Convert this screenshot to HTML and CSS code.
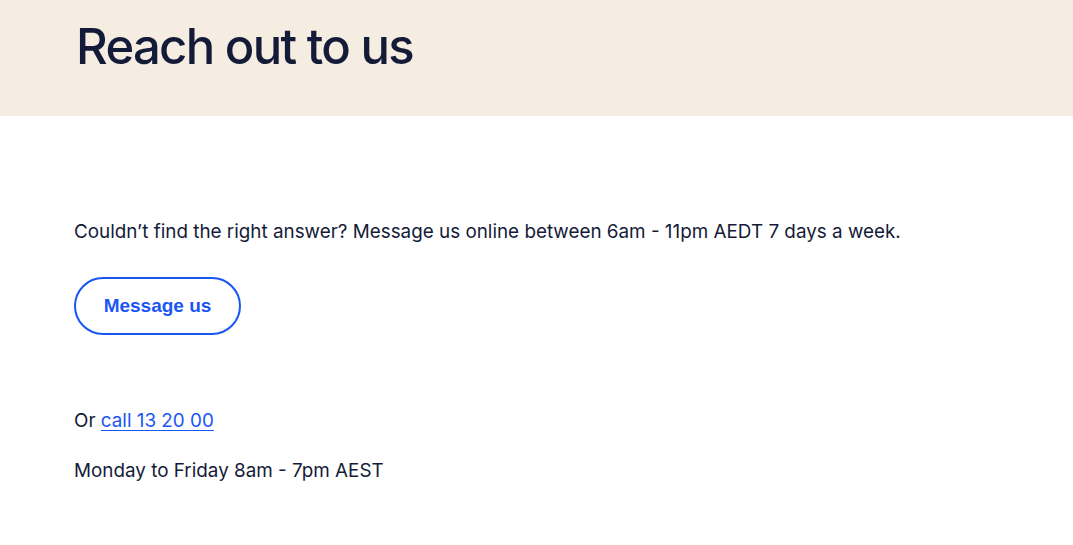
FILE: index.html
```html
<!DOCTYPE html>
<html lang="en">
<head>
<meta charset="utf-8">
<title>Reach out to us</title>
<link rel="stylesheet" href="styles.css">
</head>
<body>
<header class="hero">
  <div class="container">
    <h1 class="hero-title">Reach out to us</h1>
  </div>
</header>
<main class="content">
  <div class="container">
    <p class="intro">Couldn’t find the right answer? Message us online between 6am - 11pm AEDT 7 days a week.</p>
    <a class="btn-outline" href="#">Message us</a>
    <p class="call">Or <a class="link" href="#">call 13 20 00</a></p>
    <p class="hours">Monday to Friday 8am - 7pm AEST</p>
  </div>
</main>
</body>
</html>
```
FILE: styles.css
```css
* { box-sizing: border-box; }
html, body { margin: 0; padding: 0; background: #ffffff; }
body {
  font-family: "Inter", "Liberation Sans", sans-serif;
  color: #141b38;
}
.container {
  padding: 0 74px;
}
.hero {
  background: #f5ece2;
  height: 116px;
}
.hero-title {
  margin: 0;
  padding-top: 17px;
  padding-left: 2px;
  font-family: "Inter", "Liberation Sans", sans-serif;
  font-weight: 500;
  font-size: 49px;
  line-height: 60px;
  letter-spacing: -1.7px;
  color: #141b38;
}
.content {
  padding-top: 104px;
}
.intro {
  margin: 0;
  font-size: 18.85px;
  line-height: 24px;
}
.btn-outline {
  display: inline-flex;
  align-items: center;
  justify-content: center;
  margin-top: 33px;
  width: 167px;
  height: 58px;
  border: 2px solid #1a56f4;
  border-radius: 29px;
  font-family: "Liberation Sans", Arial, sans-serif;
  font-weight: 700;
  font-size: 19px;
  color: #1a56f4;
  text-decoration: none;
}
.call {
  margin: 74px 0 0;
  font-size: 18.85px;
  line-height: 24px;
}
.link {
  color: #1a56f4;
  text-decoration: underline;
  text-underline-offset: 3px;
}
.hours {
  margin: 26px 0 0;
  font-size: 18.85px;
  line-height: 24px;
}
```
